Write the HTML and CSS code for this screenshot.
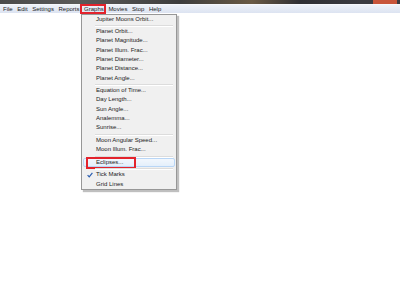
FILE: index.html
```html
<!DOCTYPE html>
<html lang="en">
<head>
    <meta charset="UTF-8">
    <title>Graphs menu</title>
    <link rel="stylesheet" href="styles.css">
</head>
<body>
    <div class="titlebar">
        <span class="close"></span>
    </div>
    <nav class="menubar">
        <span class="menu-item">File</span>
        <span class="menu-item">Edit</span>
        <span class="menu-item">Settings</span>
        <span class="menu-item">Reports</span>
        <span class="menu-item open">Graphs</span>
        <span class="menu-item">Movies</span>
        <span class="menu-item">Stop</span>
        <span class="menu-item">Help</span>
    </nav>
    <main class="workspace">
        <ul class="dropdown">
            <li class="entry">Jupiter Moons Orbit...</li>
            <li class="sep"></li>
            <li class="entry">Planet Orbit...</li>
            <li class="entry">Planet Magnitude...</li>
            <li class="entry">Planet Illum. Frac...</li>
            <li class="entry">Planet Diameter...</li>
            <li class="entry">Planet Distance...</li>
            <li class="entry">Planet Angle...</li>
            <li class="sep"></li>
            <li class="entry">Equation of Time...</li>
            <li class="entry">Day Length...</li>
            <li class="entry">Sun Angle...</li>
            <li class="entry">Analemma...</li>
            <li class="entry">Sunrise...</li>
            <li class="sep"></li>
            <li class="entry">Moon Angular Speed...</li>
            <li class="entry">Moon Illum. Frac...</li>
            <li class="sep"></li>
            <li class="entry hover">Eclipses...<span class="mark"></span></li>
            <li class="sep"></li>
            <li class="entry checked">
                <svg class="check" width="6" height="6" viewBox="0 0 6 6">
                    <path d="M0.6 3.2 L2.2 4.9 L5.4 0.8" fill="none" stroke="#2a5db0" stroke-width="1.2"/>
                </svg>
                Tick Marks
            </li>
            <li class="entry">Grid Lines</li>
        </ul>
    </main>
</body>
</html>
```

FILE: styles.css
```css
* {
    margin: 0;
    padding: 0;
    box-sizing: border-box;
}

body {
    font-family: 'Liberation Sans', Arial, sans-serif;
    background: #fff;
    color: #1b1b1b;
    width: 400px;
    height: 284px;
    overflow: hidden;
}

.titlebar {
    height: 4px;
    display: flex;
    justify-content: flex-end;
    background: linear-gradient(90deg, #4a4a4a 0%, #5b5b5b 20%, #3d3d3d 45%, #6a5a44 63%, #2f2f33 75%, #3b3b40 90%, #3b3b40 100%);
}

.close {
    width: 24px;
    margin-right: 3px;
    background: #c8553a;
}

.menubar {
    height: 9px;
    display: flex;
    align-items: center;
    gap: 4.6px;
    padding-left: 3px;
    font-size: 6px;
    background: linear-gradient(#eef2f9, #dce3f1);
    border-top: 1px solid #f6f8fc;
}

.menu-item {
    line-height: 8px;
    position: relative;
}

.menu-item.open::after {
    content: "";
    position: absolute;
    left: -4px;
    right: -2px;
    top: -1px;
    bottom: -1px;
    border: 2px solid #e3232c;
}

.workspace {
    position: relative;
    height: 271px;
}

.dropdown {
    list-style: none;
    position: absolute;
    left: 81px;
    top: 0.5px;
    width: 96px;
    background: #f0f0f0;
    border: 1px solid #979797;
    padding: 0 1px;
    font-size: 6px;
    box-shadow: 2px 2px 1px rgba(0, 0, 0, 0.25);
}

.entry {
    height: 9.3px;
    line-height: 9.3px;
    padding-left: 13px;
    position: relative;
}

.sep {
    height: 3.3px;
    margin-left: 12px;
    margin-right: 2px;
    position: relative;
}

.sep::before {
    content: "";
    position: absolute;
    left: 0;
    right: 0;
    top: 1px;
    border-top: 1px solid #dcdcdc;
    border-bottom: 1px solid #fff;
}

.hover {
    background: linear-gradient(#f2f7fd, #e4effb);
    border: 1px solid #b9d6f6;
    border-radius: 2px;
    line-height: 7.3px;
    padding-left: 12px;
}

.mark {
    position: absolute;
    left: 2px;
    top: -1.5px;
    width: 50px;
    height: 12px;
    border: 2px solid #e3232c;
}

.check {
    position: absolute;
    left: 4px;
    top: 1.8px;
}
```
